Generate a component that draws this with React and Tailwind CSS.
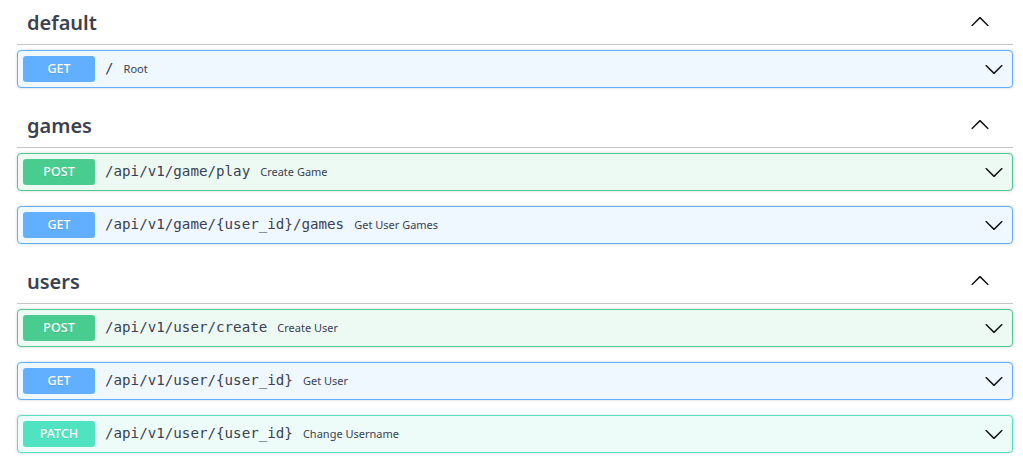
const sections = [
  {
    name: 'default',
    ops: [{ method: 'GET', path: '/', summary: 'Root' }]
  },
  {
    name: 'games',
    ops: [
      { method: 'POST', path: '/api/v1/game/play', summary: 'Create Game' },
      { method: 'GET', path: '/api/v1/game/{user_id}/games', summary: 'Get User Games' }
    ]
  },
  {
    name: 'users',
    ops: [
      { method: 'POST', path: '/api/v1/user/create', summary: 'Create User' },
      { method: 'GET', path: '/api/v1/user/{user_id}', summary: 'Get User' },
      { method: 'PATCH', path: '/api/v1/user/{user_id}', summary: 'Change Username' }
    ]
  }
]

const styles = {
  GET: { box: 'border-[#61affe] bg-[#eff7ff]', badge: 'bg-[#61affe]' },
  POST: { box: 'border-[#49cc90] bg-[#edfaf4]', badge: 'bg-[#49cc90]' },
  PATCH: { box: 'border-[#50e3c2] bg-[#edfcf9]', badge: 'bg-[#50e3c2]' }
}

function Arrow({ up }) {
  return (
    <svg width="20" height="20" viewBox="0 0 20 20" className={up ? 'rotate-180' : ''}>
      <path
        fill="#111"
        d="M17.418 6.109c.272-.268.709-.268.979 0s.271.701 0 .969l-7.908 7.83c-.27.268-.707.268-.979 0l-7.908-7.83c-.27-.268-.27-.701 0-.969.271-.268.709-.268.979 0L10 13.25l7.418-7.141z"
      />
    </svg>
  )
}

function Operation({ op }) {
  const s = styles[op.method]
  return (
    <div className={`mb-[15px] flex h-[38px] items-center rounded border px-[5px] shadow-[0_0_3px_rgba(0,0,0,0.19)] ${s.box}`}>
      <span className={`flex h-[26px] w-[72px] items-center justify-center rounded-[3px] text-[12.5px] font-medium text-white [text-shadow:0_1px_0_rgba(0,0,0,0.1)] ${s.badge}`}>
        {op.method}
      </span>
      <span className="px-[10px] font-['DejaVu_Sans_Mono',monospace] text-[14.2px] text-[#3b4151]">{op.path}</span>
      <span className="flex-1 text-[11px] text-[#3b4151]">{op.summary}</span>
      <span className="mr-[3px]"><Arrow /></span>
    </div>
  )
}

export default function App() {
  return (
    <div className="bg-white pl-[17px] pr-[10px] font-['Noto_Sans',sans-serif]">
      {sections.map((sec) => (
        <div key={sec.name}>
          <div className="mb-[5px] flex h-[45px] items-center border-b border-[#c4c6ca] pl-[10px] pr-[23px]">
            <span className="flex-1 pt-px text-[20px] font-semibold text-[#3b4151]">{sec.name}</span>
            <Arrow up />
          </div>
          {sec.ops.map((op, i) => <Operation key={i} op={op} />)}
        </div>
      ))}
    </div>
  )
}
